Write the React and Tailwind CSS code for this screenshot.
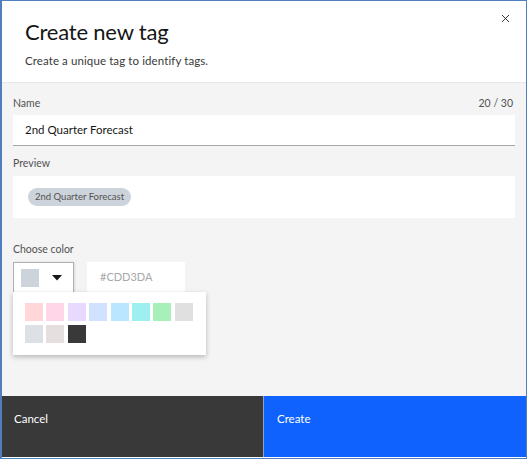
import { X } from "lucide-react";

const SWATCHES = [
  "#ffd7d9", "#ffd6e8", "#e8daff", "#d0e2ff", "#bae6ff", "#9ef0f0", "#a7f0ba", "#e0e0e0",
  "#dde1e6", "#e5e0df", "#393939",
];

export default function App() {
  return (
    <div
      className="w-[527px] h-[459px] border border-l-2 border-[#4f7fbf] bg-white flex flex-col overflow-hidden"
      style={{ fontFamily: "Lato, 'Noto Sans', sans-serif" }}
    >
      {/* header */}
      <div className="relative h-[82px] shrink-0 bg-white px-[23px] pt-[16px] border-b border-[#e8e8e8]">
        <h1 className="text-[22px] leading-[30px] font-normal tracking-[-0.2px] text-[#161616]">Create new tag</h1>
        <p className="mt-[6px] text-[11.5px] leading-4 tracking-[0.1px] text-[#393939]">Create a unique tag to identify tags.</p>
        <button className="absolute right-[14px] top-[11px] text-[#161616]">
          <X size={13} strokeWidth={1.6} />
        </button>
      </div>

      {/* body */}
      <div className="flex-1 bg-[#f4f4f4] px-[11px] pt-[12px] flex flex-col">
        <div className="flex justify-between text-[10.5px] leading-4 text-[#525252]">
          <span>Name</span>
          <span className="pr-[2px]">20 / 30</span>
        </div>
        <div className="mt-[4px] h-[31px] bg-white border-b border-[#a8a8a8] flex items-center px-3 text-[11.5px] text-[#161616]">
          2nd Quarter Forecast
        </div>

        <div className="mt-[9px] text-[10.5px] leading-4 text-[#525252]">Preview</div>
        <div className="mt-[5px] h-[42px] bg-white flex items-center px-[15px]">
          <span className="h-[18px] px-[7px] rounded-full bg-[#cdd3da] text-[#525252] text-[9.5px] flex items-center">
            2nd Quarter Forecast
          </span>
        </div>

        <div className="mt-[23px] text-[10.5px] leading-4 text-[#525252]">Choose color</div>
        <div className="relative mt-[5px] flex items-start gap-[13px]">
          <div className="w-[61px] h-[30px] bg-white border border-b-0 border-[#b0b0b0] shadow-[1px_0_2px_rgba(0,0,0,0.1)] flex items-center pl-[7px] gap-[13px]">
            <span className="w-[18px] h-[18px] bg-[#cdd3da]" />
            <svg width="10" height="6" viewBox="0 0 10 6">
              <path d="M0 0h10L5 5.5z" fill="#161616" />
            </svg>
          </div>
          <div className="w-[98px] h-[30px] bg-white flex items-center pl-[13px] text-[11px] text-[#a8a8a8]">
            #CDD3DA
          </div>

          {/* swatch popover */}
          <div className="absolute left-[0px] top-[30px] w-[193px] bg-white shadow-[0_2px_5px_rgba(0,0,0,0.25)] px-[12px] pt-[11px] pb-[12px]">
            <div className="grid grid-cols-8 gap-x-[3px] gap-y-[4px] w-[168px]">
              {SWATCHES.map((c) => (
                <span key={c} className="w-[18px] h-[18px]" style={{ background: c }} />
              ))}
            </div>
          </div>
        </div>
      </div>

      {/* footer */}
      <div className="h-[62px] shrink-0 flex border-b border-b-white">
        <button className="flex-1 bg-[#393939] text-white text-[11.5px] text-left pl-[12px] pb-[16px] border-r border-[#8fa4c8]">
          Cancel
        </button>
        <button className="flex-1 bg-[#0f62fe] text-white text-[11.5px] text-left pl-[13px] pb-[16px]">
          Create
        </button>
      </div>
    </div>
  );
}
